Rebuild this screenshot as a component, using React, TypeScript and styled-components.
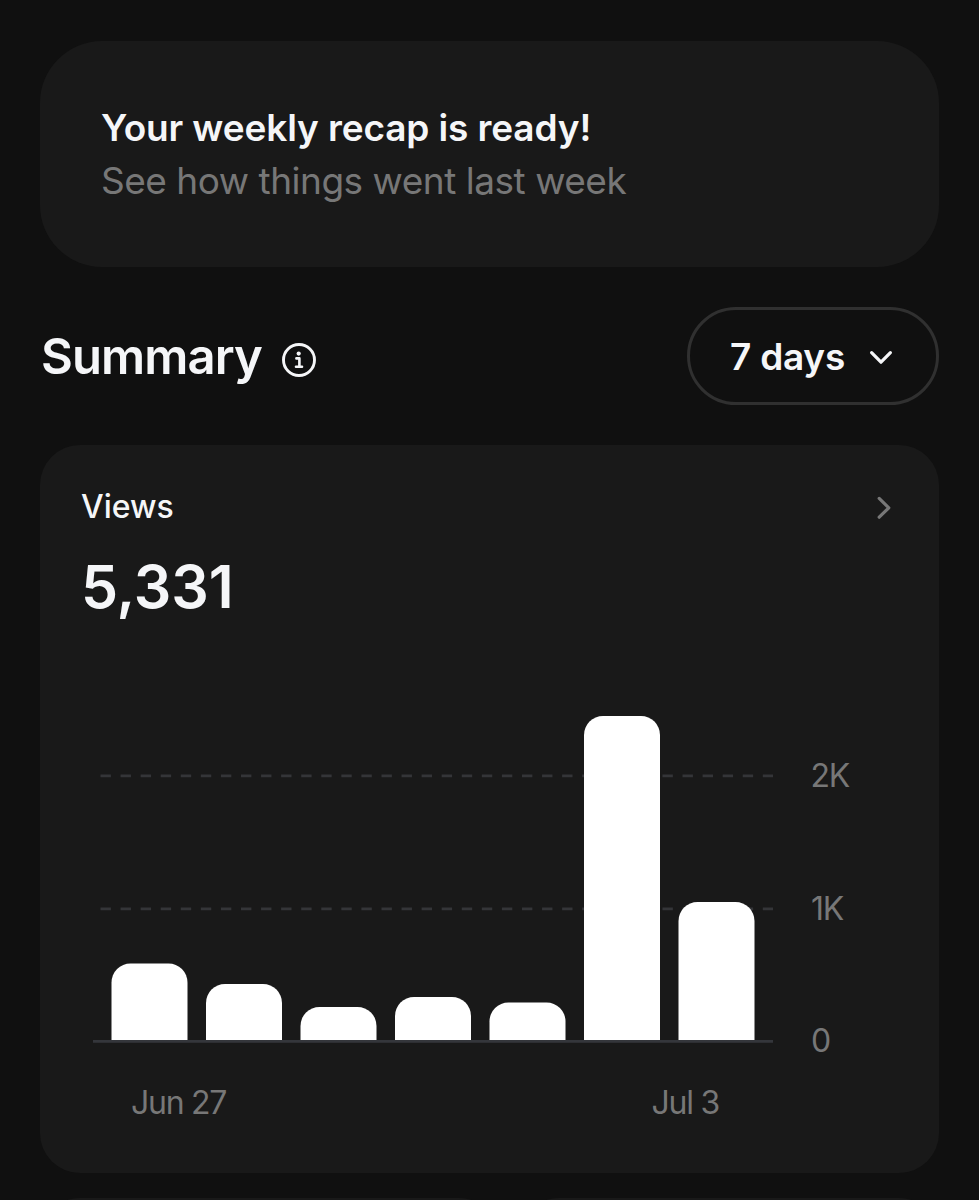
import React from 'react';
import styled, { createGlobalStyle } from 'styled-components';

const GlobalStyle = createGlobalStyle`
  * {
    box-sizing: border-box;
  }
  body {
    margin: 0;
    background: #101010;
    color: #f5f6f8;
    font-family: Inter, 'Liberation Sans', sans-serif;
  }
`;

const Page = styled.main`
  display: flex;
  flex-direction: column;
  width: 979px;
  height: 1200px;
  padding: 41px 40px 0;
  overflow: hidden;
`;

const Card = styled.section<{ $radius: number }>`
  flex-shrink: 0;
  background: #191919;
  border-radius: ${({ $radius }) => $radius}px;
`;

const RecapCard = styled(Card)`
  height: 226px;
  padding: 60px 61px;
`;

const RecapTitle = styled.h2`
  margin: 0;
  font-size: 37px;
  line-height: 53px;
  font-weight: 600;
  letter-spacing: -0.12px;
  white-space: nowrap;
`;

const RecapText = styled.p`
  margin: 0;
  color: #777;
  font-size: 37px;
  line-height: 53px;
  letter-spacing: -0.48px;
  white-space: nowrap;
`;

const SummaryHeader = styled.header`
  display: flex;
  align-items: center;
  justify-content: space-between;
  flex-shrink: 0;
  height: 98px;
  margin: 40px 0;
`;

const SummaryTitle = styled.h1`
  display: flex;
  align-items: center;
  gap: 19px;
  margin: 0;
  padding: 2px 0 0 1px;
  font-size: 49px;
  line-height: 60px;
  font-weight: 600;
  letter-spacing: -0.9px;

  svg {
    margin-top: 6px;
  }
`;

const RangeButton = styled.button`
  display: flex;
  align-items: center;
  justify-content: space-between;
  width: 252px;
  height: 98px;
  padding: 0 43px 0 40px;
  border: 3px solid #303030;
  border-radius: 49px;
  background: transparent;
  color: inherit;
  font-family: inherit;
  font-size: 37px;
  font-weight: 600;
  letter-spacing: -0.25px;

  svg {
    margin-top: 3px;
  }
`;

const ViewsCard = styled(Card)`
  height: 728px;
  padding: 40px 47px 0 41px;
`;

const ViewsHeader = styled.div`
  display: flex;
  align-items: center;
  justify-content: space-between;
  height: 44px;
`;

const ViewsLabel = styled.h3`
  margin: -1px 0 0;
  font-size: 32px;
  font-weight: 550;
  letter-spacing: 0;
`;

const ViewsTotal = styled.div`
  margin-top: 22px;
  font-size: 59px;
  line-height: 72px;
  font-weight: 600;
  letter-spacing: -0.1px;
`;

const Chart = styled.svg`
  display: block;
  margin: 77px 0 0 -41px;
  font-size: 32px;
  letter-spacing: -1.25px;
`;

const BottomCards = styled.div`
  display: grid;
  grid-template-columns: 459px 1fr;
  gap: 20px;
  flex-shrink: 0;
  margin-top: 25px;
`;

const StatCard = styled(Card)`
  height: 300px;
`;

const BASELINE = 340;
const BAR_WIDTH = 76;
const bars = [
  { x: 71.5, height: 76.5 },
  { x: 166, height: 56 },
  { x: 260.5, height: 33 },
  { x: 355, height: 43 },
  { x: 449.5, height: 37.5 },
  { x: 544, height: 324 },
  { x: 638.5, height: 138 },
];

const barPath = (x: number, height: number) => {
  const top = BASELINE - height;
  const r = 19;
  return `M${x} ${BASELINE}V${top + r}A${r} ${r} 0 0 1 ${x + r} ${top}H${
    x + BAR_WIDTH - r
  }A${r} ${r} 0 0 1 ${x + BAR_WIDTH} ${top + r}V${BASELINE}Z`;
};

function InfoIcon(): JSX.Element {
  return (
    <svg width="36" height="36" viewBox="0 0 36 36" fill="none">
      <circle cx="18" cy="18" r="15.5" stroke="#f5f6f8" strokeWidth="2.9" />
      <circle cx="17.7" cy="11.6" r="2.1" fill="#f5f6f8" />
      <path
        d="M15.4 16.4h3v8.2M15 24.8h6"
        stroke="#f5f6f8"
        strokeWidth="2.6"
        strokeLinecap="round"
        strokeLinejoin="round"
      />
    </svg>
  );
}

function ViewsChart(): JSX.Element {
  return (
    <Chart width="899" height="440" viewBox="0 0 899 440">
      {[75.8, 208.8].map((y) => (
        <path
          key={y}
          d={`M60.5 ${y}H733`}
          stroke="#343538"
          strokeWidth="2.8"
          strokeDasharray="10.4 9.67"
        />
      ))}
      {bars.map(({ x, height }) => (
        <path key={x} d={barPath(x, height)} fill="#fff" />
      ))}
      <path d="M53 341.4H733" stroke="#34363b" strokeWidth="2.8" />
      <g fill="#777">
        <text x="770.5" y="87">2K</text>
        <text x="771" y="220">1K</text>
        <text x="771" y="352">0</text>
        <text x="91" y="414">Jun 27</text>
        <text x="611.5" y="414">Jul 3</text>
      </g>
    </Chart>
  );
}

function App(): JSX.Element {
  return (
    <Page>
      <GlobalStyle />
      <RecapCard $radius={62}>
        <RecapTitle>Your weekly recap is ready!</RecapTitle>
        <RecapText>See how things went last week</RecapText>
      </RecapCard>
      <SummaryHeader>
        <SummaryTitle>
          Summary
          <InfoIcon />
        </SummaryTitle>
        <RangeButton>
          7 days
          <svg width="24" height="15" viewBox="0 0 24 15" fill="none">
            <path
              d="M2.6 2.6l9.4 9.6 9.4-9.6"
              stroke="#f5f6f8"
              strokeWidth="3.2"
              strokeLinecap="round"
              strokeLinejoin="round"
            />
          </svg>
        </RangeButton>
      </SummaryHeader>
      <ViewsCard $radius={40}>
        <ViewsHeader>
          <ViewsLabel>Views</ViewsLabel>
          <svg width="16" height="24" viewBox="0 0 16 24" fill="none">
            <path
              d="M3.2 3.4l9.6 9.4-9.6 9.4"
              stroke="#777"
              strokeWidth="3.2"
              strokeLinecap="round"
              strokeLinejoin="round"
            />
          </svg>
        </ViewsHeader>
        <ViewsTotal>5,331</ViewsTotal>
        <ViewsChart />
      </ViewsCard>
      <BottomCards>
        <StatCard $radius={40} />
        <StatCard $radius={40} />
      </BottomCards>
    </Page>
  );
}

export default App;
